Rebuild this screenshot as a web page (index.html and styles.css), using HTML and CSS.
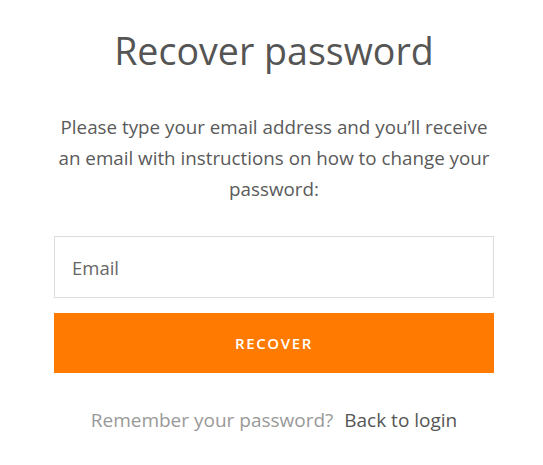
FILE: index.html
```html
<!DOCTYPE html>
<html lang="en">

<head>
    <meta charset="UTF-8">
    <meta name="viewport" content="width=device-width, initial-scale=1.0">
    <title>Recover password</title>
    <link rel="stylesheet" href="styles.css">
</head>

<body>
    <main class="recover-container">
        <h1>Recover password</h1>
        <p class="intro">Please type your email address and you’ll receive an email with instructions on how to change your password:</p>
        <form class="recover-form">
            <input type="email" class="email-input" placeholder="Email">
            <button type="submit" class="recover-btn">RECOVER</button>
        </form>
        <p class="back-link">
            <span class="muted">Remember your password?</span>
            <a href="/login">Back to login</a>
        </p>
    </main>
</body>

</html>
```

FILE: styles.css
```css
:root {
    --accent-color: #ff7a00;
    --text-color: #555;
}

body {
    font-family: "Open Sans", Arial, sans-serif;
    background-color: #fff;
    margin: 0;
    padding: 0 0 0 5px;
    color: var(--text-color);
}

.recover-container {
    width: 440px;
    margin: 0 auto;
    padding-top: 26px;
    text-align: center;
}

h1 {
    margin: 0;
    font-size: 37.6px;
    font-weight: 400;
    line-height: 50px;
    color: #555;
}

.intro {
    margin: 36px 0 0;
    font-size: 18.8px;
    line-height: 31px;
    color: #5a5a5a;
}

.recover-form {
    display: flex;
    flex-direction: column;
    gap: 15px;
    margin-top: 31px;
}

.email-input {
    box-sizing: border-box;
    height: 62px;
    padding: 0 17px;
    border: 1px solid #dcdcdc;
    font-family: inherit;
    font-size: 18.5px;
    color: var(--text-color);
    outline: none;
}

.email-input::placeholder {
    color: #666;
}

.recover-btn {
    height: 60px;
    border: none;
    background-color: var(--accent-color);
    color: white;
    font-family: inherit;
    font-size: 15px;
    font-weight: 600;
    letter-spacing: 1.6px;
    cursor: pointer;
}

.back-link {
    margin: 31px 0 0;
    font-size: 19px;
    line-height: 32px;
}

.muted {
    color: #999;
    margin-right: 6px;
}

.back-link a {
    color: #555;
    text-decoration: none;
}
```
